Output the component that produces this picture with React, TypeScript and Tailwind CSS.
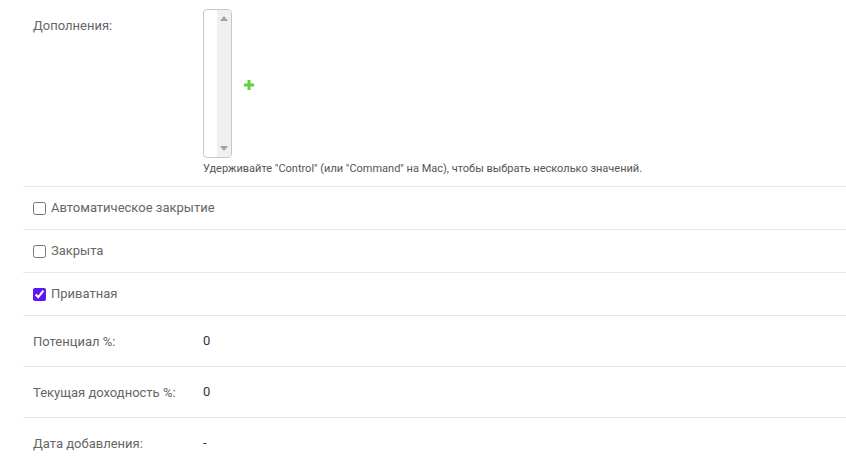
import React from "react";

const font = { fontFamily: "Roboto, 'Liberation Sans', sans-serif" };

function CheckRow({ label, checked }: { label: string; checked?: boolean }) {
  return (
    <div className="border-b border-[#e8e8e8] py-[10px] pl-[10px]">
      <label className="flex h-[22px] items-center gap-[5px] text-[13px] text-[#666]">
        <input
          type="checkbox"
          defaultChecked={checked}
          className="h-[13px] w-[13px] accent-[#5b17f2]"
        />
        <span>{label}</span>
      </label>
    </div>
  );
}

function ReadRow({ label, value }: { label: string; value: string }) {
  return (
    <div className="flex h-[51px] items-center border-b border-[#e8e8e8] pl-[10px]">
      <div className="w-[170px] pt-[1px] text-[13px] text-[#666]">{label}</div>
      <div className="text-[13px] text-[#333]">{value}</div>
    </div>
  );
}

export default function App() {
  return (
    <div className="h-[466px] w-[846px] overflow-hidden bg-white" style={font}>
      <div className="pl-[23px]">
        <div className="border-b border-[#e8e8e8] pt-[9px] pb-[10px]">
          <div className="flex">
            <div className="w-[180px] pl-[10px] pt-[9px] text-[13px] leading-[16px] text-[#666]">
              Дополнения:
            </div>
            <div className="flex flex-col">
              <div className="flex items-center">
                <div className="flex h-[149px] w-[29px] overflow-hidden rounded-[4px] border border-[#c8c8c8] bg-white">
                  <div className="w-[13px]" />
                  <div className="flex w-[14px] flex-col items-center justify-between bg-[#f0f0f0] pt-[6px] pb-[6px]">
                    <svg width="8" height="5" viewBox="0 0 8 5">
                      <path d="M4 0 L8 5 L0 5 Z" fill="#a3a3a3" />
                    </svg>
                    <svg width="8" height="5" viewBox="0 0 8 5">
                      <path d="M0 0 L8 0 L4 5 Z" fill="#a3a3a3" />
                    </svg>
                  </div>
                </div>
                <svg width="10" height="10" viewBox="0 0 10 10" className="ml-[12px] mt-[2px]">
                  <path d="M3.5 0 H6.5 V3.5 H10 V6.5 H6.5 V10 H3.5 V6.5 H0 V3.5 H3.5 Z" fill="#62cf3e" />
                </svg>
              </div>
              <div className="mt-[4px] text-[11px] leading-[14px] text-[#555]">
                Удерживайте "Control" (или "Command" на Mac), чтобы выбрать несколько значений.
              </div>
            </div>
          </div>
        </div>
        <CheckRow label="Автоматическое закрытие" />
        <CheckRow label="Закрыта" />
        <CheckRow label="Приватная" checked />
        <ReadRow label="Потенциал %:" value="0" />
        <ReadRow label="Текущая доходность %:" value="0" />
        <ReadRow label="Дата добавления:" value="-" />
      </div>
    </div>
  );
}
